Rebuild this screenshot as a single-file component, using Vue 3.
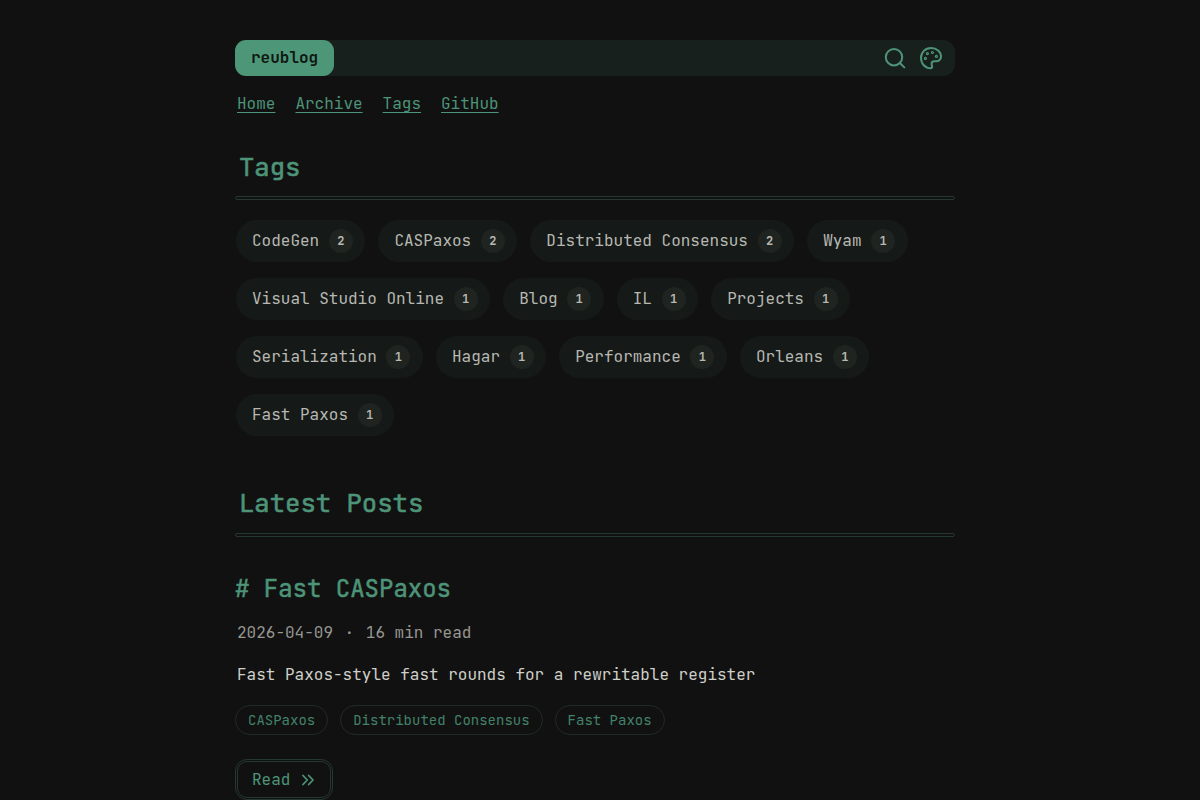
<script setup>
const links = ['Home', 'Archive', 'Tags', 'GitHub']

const tags = [
  { name: 'CodeGen', count: 2 },
  { name: 'CASPaxos', count: 2 },
  { name: 'Distributed Consensus', count: 2 },
  { name: 'Wyam', count: 1 },
  { name: 'Visual Studio Online', count: 1 },
  { name: 'Blog', count: 1 },
  { name: 'IL', count: 1 },
  { name: 'Projects', count: 1 },
  { name: 'Serialization', count: 1 },
  { name: 'Hagar', count: 1 },
  { name: 'Performance', count: 1 },
  { name: 'Orleans', count: 1 },
  { name: 'Fast Paxos', count: 1 }
]

const post = {
  title: 'Fast CASPaxos',
  date: '2026-04-09',
  time: '16 min read',
  summary: 'Fast Paxos-style fast rounds for a rewritable register',
  tags: ['CASPaxos', 'Distributed Consensus', 'Fast Paxos']
}
</script>

<template>
  <div class="page">
    <header class="bar">
      <a class="logo">reublog</a>
      <div class="tools">
        <svg width="24" height="24" viewBox="0 0 24 24">
          <circle cx="11" cy="11.2" r="8.2" />
          <path d="M16.8 17L21.3 21.4" />
        </svg>
        <svg width="24" height="24" viewBox="0 0 24 24">
          <path d="M12 2C6.3 2 2 6.4 2 12s4.3 10.2 9.6 10.2c1 0 1.5-.6 1.5-1.6 0-1.1-.5-1.7-.5-2.8 0-1.5 1-2.4 2.5-2.5h1.9c2.9 0 5-1.9 5-4.7C22 5.8 17.7 2 12 2z" />
          <circle class="dot" cx="6.4" cy="12.4" r="1" />
          <circle class="dot" cx="8.4" cy="7.6" r="1" />
          <circle class="dot" cx="13.4" cy="6.5" r="1" />
          <circle class="dot" cx="17.4" cy="10.4" r="1" />
        </svg>
      </div>
    </header>

    <nav class="nav">
      <a v-for="link in links" :key="link">{{ link }}</a>
    </nav>

    <h1 class="heading">Tags</h1>
    <div class="rule" />

    <div class="tags">
      <a v-for="tag in tags" :key="tag.name" class="tag">
        {{ tag.name }}
        <span class="count">{{ tag.count }}</span>
      </a>
    </div>

    <h1 class="heading latest">Latest Posts</h1>
    <div class="rule" />

    <article class="post">
      <h2># {{ post.title }}</h2>
      <p class="meta">{{ post.date }} <span class="sep">·</span> {{ post.time }}</p>
      <p class="summary">{{ post.summary }}</p>
      <div class="post-tags">
        <a v-for="tag in post.tags" :key="tag">{{ tag }}</a>
      </div>
      <a class="read">
        Read
        <svg width="16" height="16" viewBox="0 0 16 16">
          <path d="M3 3.5L7.3 8L3 12.5M8.7 3.5L13 8L8.7 12.5" />
        </svg>
      </a>
    </article>
  </div>
</template>

<style>
html,
body {
  background: #111;
  overflow: hidden;
}
</style>

<style scoped>
.page {
  box-sizing: border-box;
  width: 720px;
  height: 800px;
  margin-left: 235px;
  padding-top: 40px;
  overflow: hidden;
  color: #b8b8b2;
  font: 16px/24px "JetBrains Mono", "DejaVu Sans Mono", monospace;
}

svg {
  display: block;
  fill: none;
  stroke: #4d9478;
  stroke-width: 2;
  stroke-linecap: round;
  stroke-linejoin: round;
}

.bar {
  display: flex;
  justify-content: space-between;
  height: 36px;
  border-radius: 12px;
  background: #18201d;
}

.logo {
  padding: 0 16px;
  border-radius: 11px;
  background: #4d9778;
  color: #101713;
  font-weight: bold;
  line-height: 35px;
}

.tools {
  display: flex;
  align-items: center;
  gap: 12px;
  padding-right: 12px;
}

.dot {
  stroke-width: 1.2;
}

.nav {
  display: flex;
  gap: 20px;
  margin: 16px 2px 0;
}

.nav a {
  color: #4d9478;
  text-decoration: underline;
  text-decoration-thickness: 1px;
  text-underline-offset: 3px;
}

.heading {
  margin: 35px 0 13px 4px;
  color: #4d9478;
  font-size: 25.6px;
  font-weight: normal;
  line-height: 32px;
  -webkit-text-stroke: 0.6px #4d9478;
}

.rule {
  box-sizing: border-box;
  height: 4px;
  border: 1px solid #24382f;
  border-radius: 2px;
}

.tags {
  display: flex;
  flex-wrap: wrap;
  gap: 16px 13.2px;
  margin: 20px 0 0 1px;
}

.tag {
  display: flex;
  align-items: center;
  gap: 9.6px;
  box-sizing: border-box;
  height: 42px;
  padding: 0 12.4px 0 16px;
  border-radius: 21px;
  background: #151a18;
}

.count {
  width: 24px;
  height: 24px;
  border-radius: 50%;
  background: #1f2421;
  font-size: 12px;
  font-weight: bold;
  text-align: center;
}

.latest {
  margin-top: 51px;
  margin-bottom: 14px;
}

.post {
  padding-top: 36px;
}

.post h2 {
  margin: 0;
  color: #4d9478;
  font-size: 24px;
  font-weight: normal;
  line-height: 32px;
  -webkit-text-stroke: 0.5px #4d9478;
}

.meta {
  margin: 16px 2px 0;
  color: #979791;
}

.sep {
  margin: 0 2px;
}

.summary {
  margin: 18px 2px 0;
  color: #d0d0ca;
}

.post-tags {
  display: flex;
  gap: 12px;
  margin-top: 18px;
}

.post-tags a {
  padding: 0 12px;
  border: 1px solid #202b26;
  border-radius: 15px;
  color: #43826a;
  font-size: 14px;
  line-height: 28px;
}

.read {
  display: inline-flex;
  align-items: center;
  gap: 10px;
  box-sizing: border-box;
  width: 98px;
  height: 41px;
  margin-top: 24px;
  padding-left: 14px;
  border: 3px double #24382f;
  border-radius: 12px;
  color: #4d9478;
}

.read svg {
  stroke-width: 1.8;
}
</style>
